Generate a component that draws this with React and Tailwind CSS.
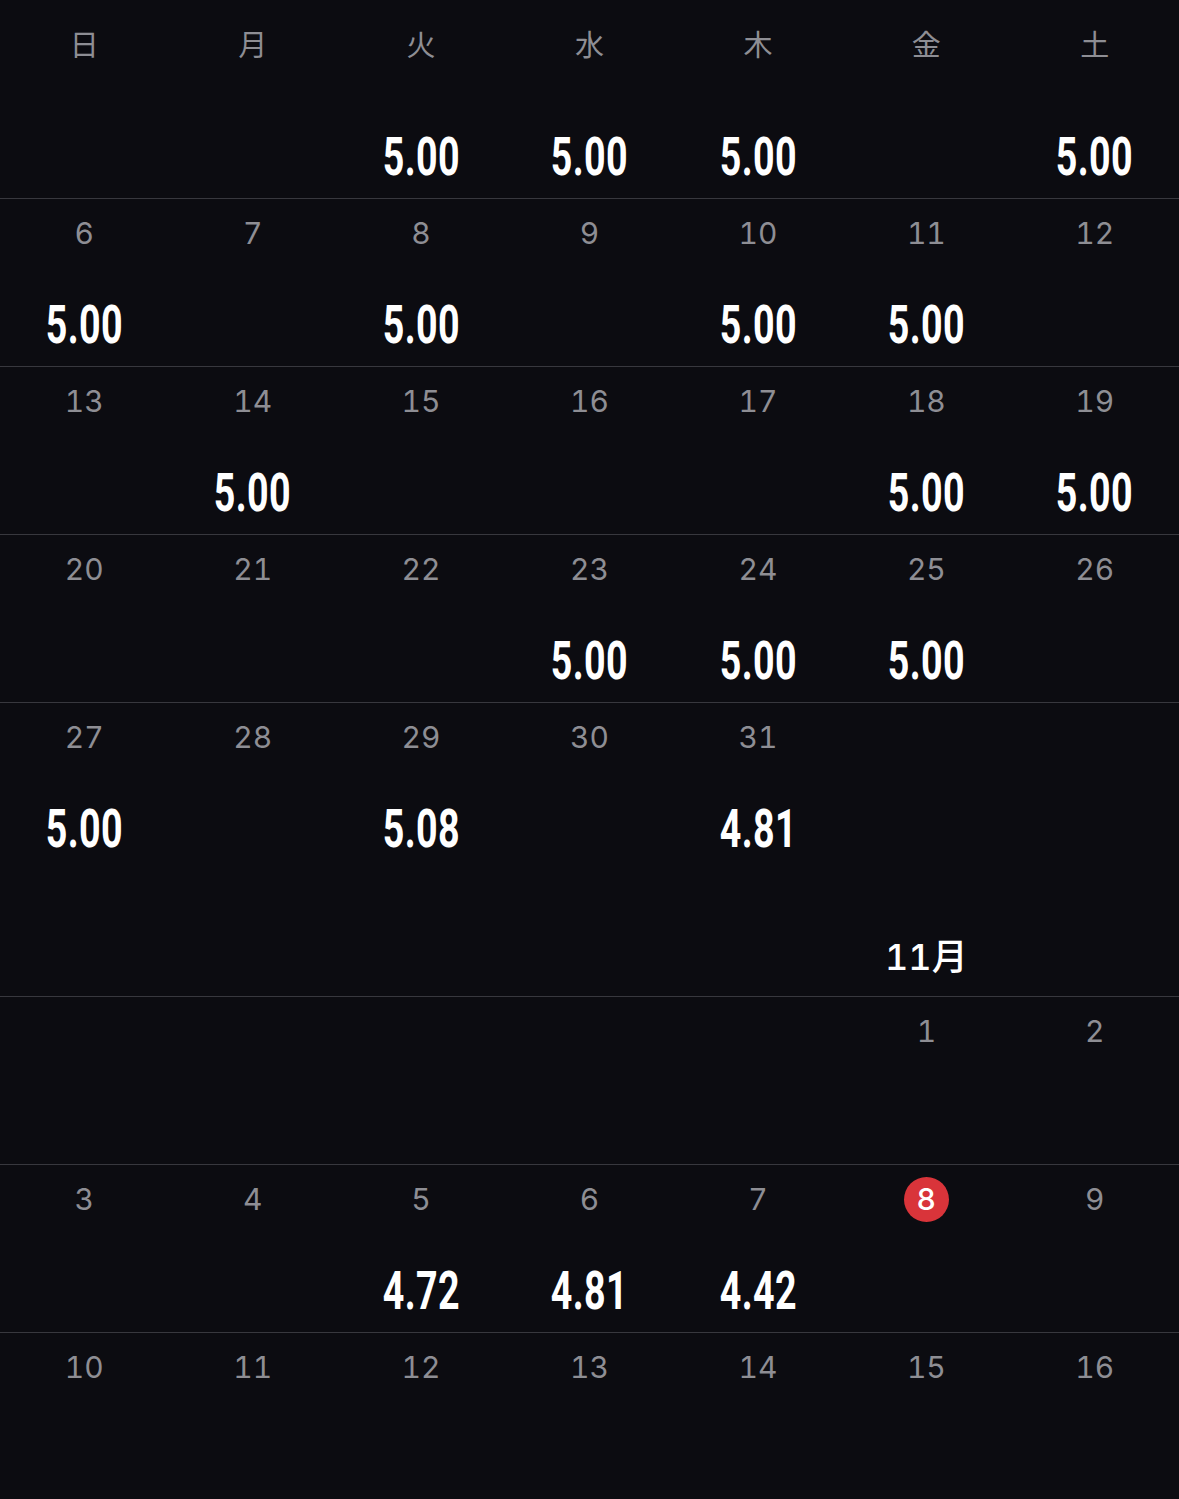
import React from "react";

const weekdays = ["日", "月", "火", "水", "木", "金", "土"];
const topValues = ["", "", "5.00", "5.00", "5.00", "", "5.00"];

const octWeeks = [
  [
    { d: 6, v: "5.00" },
    { d: 7 },
    { d: 8, v: "5.00" },
    { d: 9 },
    { d: 10, v: "5.00" },
    { d: 11, v: "5.00" },
    { d: 12 },
  ],
  [
    { d: 13 },
    { d: 14, v: "5.00" },
    { d: 15 },
    { d: 16 },
    { d: 17 },
    { d: 18, v: "5.00" },
    { d: 19, v: "5.00" },
  ],
  [
    { d: 20 },
    { d: 21 },
    { d: 22 },
    { d: 23, v: "5.00" },
    { d: 24, v: "5.00" },
    { d: 25, v: "5.00" },
    { d: 26 },
  ],
  [
    { d: 27, v: "5.00" },
    { d: 28 },
    { d: 29, v: "5.08" },
    { d: 30 },
    { d: 31, v: "4.81" },
    {},
    {},
  ],
];

const novWeeks = [
  [{}, {}, {}, {}, {}, { d: 1 }, { d: 2 }],
  [
    { d: 3 },
    { d: 4 },
    { d: 5, v: "4.72" },
    { d: 6, v: "4.81" },
    { d: 7, v: "4.42" },
    { d: 8, today: true },
    { d: 9 },
  ],
  [
    { d: 10 },
    { d: 11 },
    { d: 12 },
    { d: 13 },
    { d: 14 },
    { d: 15 },
    { d: 16 },
  ],
];

function Value({ v }) {
  if (!v) return null;
  return (
    <span
      className="inline-block scale-x-[0.71] origin-center text-[53px] leading-[60px] font-bold text-white tracking-[0.5px]"
      style={{ fontFamily: "Roboto, 'Liberation Sans', sans-serif" }}
    >
      {v}
    </span>
  );
}

function DayCell({ cell }) {
  return (
    <div className="flex flex-col items-center">
      <div className="h-[36px] flex items-center justify-center text-[30px] leading-[36px] tabular-nums text-[#8e8e94]">
        {cell.today ? (
          <div className="shrink-0 w-[45px] h-[45px] rounded-full bg-[#d9343a] flex items-center justify-center text-white text-[30px] font-medium">
            {cell.d}
          </div>
        ) : (
          cell.d
        )}
      </div>
      <div className="h-[60px] mt-[44px] flex items-center justify-center">
        <Value v={cell.v} />
      </div>
    </div>
  );
}

function WeekRow({ week }) {
  return (
    <div className="grid grid-cols-7 h-[168px] border-t border-[#38383e] pt-[16px]">
      {week.map((cell, i) => (
        <DayCell key={i} cell={cell} />
      ))}
    </div>
  );
}

export default function App() {
  return (
    <div
      className="w-[1179px] h-[1499px] overflow-hidden bg-[#0c0c11]"
      style={{ fontFamily: "Inter, 'Noto Sans CJK JP', sans-serif" }}
    >
      {/* weekday header + first partial week */}
      <div className="grid grid-cols-7 h-[198px] pt-[28px]">
        {weekdays.map((w, i) => (
          <div key={w} className="flex flex-col items-center">
            <div className="h-[36px] leading-[36px] text-[29px] text-[#8e8e94]">
              {w}
            </div>
            <div className="h-[60px] mt-[63px] flex items-center justify-center">
              <Value v={topValues[i]} />
            </div>
          </div>
        ))}
      </div>

      {octWeeks.map((week, i) => (
        <WeekRow key={i} week={week} />
      ))}

      {/* month label */}
      <div className="grid grid-cols-7 h-[126px] pt-[65px]">
        <div className="col-start-6 flex justify-center">
          <span className="text-[36px] leading-[44px] font-medium tabular-nums text-white">
            11月
          </span>
        </div>
      </div>

      {novWeeks.map((week, i) => (
        <WeekRow key={i} week={week} />
      ))}
    </div>
  );
}
